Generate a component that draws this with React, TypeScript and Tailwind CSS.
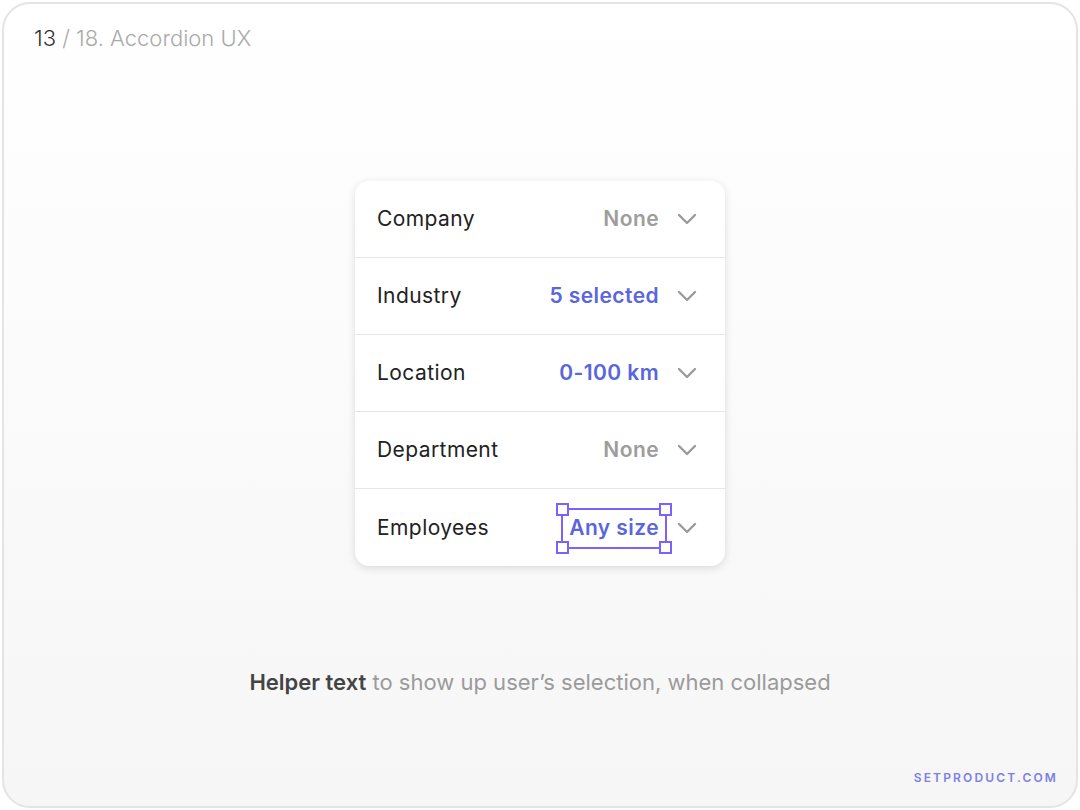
const rows = [
  { label: "Company", value: "None", active: false },
  { label: "Industry", value: "5 selected", active: true },
  { label: "Location", value: "0-100 km", active: true },
  { label: "Department", value: "None", active: false },
  { label: "Employees", value: "Any size", active: true, selected: true },
];

function Chevron() {
  return (
    <svg width="20" height="12" viewBox="0 0 20 12" fill="none" className="shrink-0">
      <path d="M2 2l8 8 8-8" stroke="#9b9b9b" strokeWidth="2.4" strokeLinecap="round" strokeLinejoin="round" />
    </svg>
  );
}

function Handle({ className }: { className: string }) {
  return <span className={`absolute w-[13px] h-[13px] bg-white border-2 border-[#7b61ff] ${className}`} />;
}

export default function App() {
  return (
    <div className="h-[810px] w-[1080px] bg-white p-[2px] font-['Inter',sans-serif]">
      <div className="relative flex flex-col h-full rounded-[28px] border-2 border-[#e4e4e4] bg-gradient-to-b from-white to-[#f6f6f6] px-[30px] pt-[20px] pb-[20px]">
        <p className="text-[22px] leading-[28px] font-light text-[#aaaaaa]">
          <span className="text-[#333333]">13</span> / 18. Accordion UX
        </p>

        <div className="self-center mt-[129px] w-[370px] bg-white rounded-[14px] shadow-[0_2px_8px_rgba(0,0,0,0.13)]">
          {rows.map((r, i) => (
            <div
              key={r.label}
              className={`flex items-center h-[77px] pl-[22px] pr-[28px] ${i < rows.length - 1 ? "border-b border-[#e6e6e6]" : ""}`}
            >
              <span className="text-[21px] leading-[24px] tracking-[0.02em] text-[#222222]">{r.label}</span>
              <span className="ml-auto mr-[18px] relative text-[21px] leading-[24px] tracking-[0.02em] font-semibold">
                <span className={r.active ? "text-[#5a66dc]" : "text-[#9d9d9d]"}>{r.value}</span>
                {r.selected && (
                  <span className="absolute -left-[8px] -right-[8px] -top-[8px] -bottom-[9px] border-2 border-[#7b61ff]">
                    <Handle className="-left-[7px] -top-[7px]" />
                    <Handle className="-right-[7px] -top-[7px]" />
                    <Handle className="-left-[7px] -bottom-[7px]" />
                    <Handle className="-right-[7px] -bottom-[7px]" />
                  </span>
                )}
              </span>
              <Chevron />
            </div>
          ))}
        </div>

        <p className="self-center mt-[102px] text-[22px] leading-[28px] text-[#9b9b9b]">
          <span className="font-semibold text-[#444444]">Helper text</span> to show up user’s selection, when collapsed
        </p>

        <p className="mt-auto self-end mr-[-12px] text-[12px] leading-[16px] font-semibold tracking-[0.18em] text-[#7b80e6]">
          SETPRODUCT.COM
        </p>
      </div>
    </div>
  );
}
